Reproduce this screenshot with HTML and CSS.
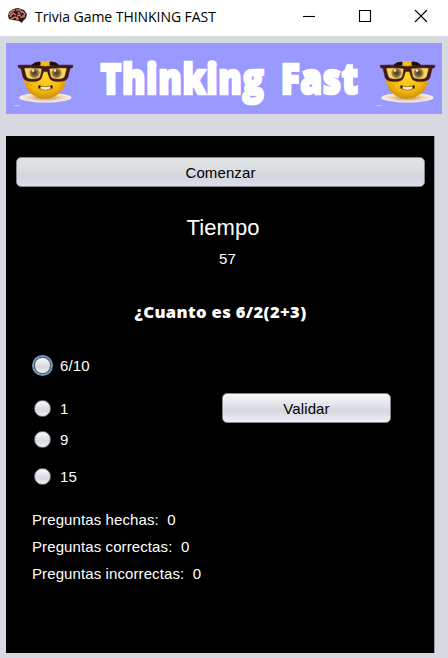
FILE: index.html
```html
<!DOCTYPE html>
<html lang="es">
<head>
<meta charset="utf-8">
<title>Trivia Game THINKING FAST</title>
<link rel="stylesheet" href="styles.css">
</head>
<body>
<header class="titlebar">
  <svg class="brain" width="22" height="18" viewBox="0 0 22 18">
    <path d="M1 9 2 5 6 2l5-1 6 2 3 4-1 4-3 3-1 2-3-2-6-1-4-1z" fill="#2c1715"/>
    <path d="M2 8l3-4 3-1M3 10l3-4 3 2M4 12l4-2 3 1M9 3l4 0 2 3M11 5l2 3-3 1M15 4l3 3-2 2M13 10l3 0 2-1M9 12l3 0" fill="none" stroke="#c97a70" stroke-width="1.5"/>
  </svg>
  <h1 class="title">Trivia Game THINKING FAST</h1>
  <div class="controls">
    <svg width="14" height="14" viewBox="0 0 14 14"><path d="M1 7.5h12" /></svg>
    <svg width="14" height="14" viewBox="0 0 14 14"><path d="M1.500 1.500h11v11h-11z"/></svg>
    <svg width="14" height="14" viewBox="0 0 14 14"><path d="M1 1l12 12M13 1L1 13"/></svg>
  </div>
</header>
<main class="content">
  <svg class="banner" width="436" height="71" viewBox="6 43 436 71">
    <defs>
      <radialGradient id="skin" cx=".5" cy=".4" r=".62">
        <stop offset="0" stop-color="#ffd727"/><stop offset=".65" stop-color="#f2b90d"/><stop offset="1" stop-color="#d08a06"/>
      </radialGradient>
      <radialGradient id="shade">
        <stop offset="0" stop-color="#b98540"/><stop offset=".6" stop-color="#ecd3b4"/><stop offset="1" stop-color="#fbf3ea"/>
      </radialGradient>
      <radialGradient id="eye">
        <stop offset="0" stop-color="#4b3518"/><stop offset=".6" stop-color="#80653a"/><stop offset="1" stop-color="#c7ac67"/>
      </radialGradient>
      <g id="nerd">
        <ellipse cx="45.3" cy="97.7" rx="26.2" ry="4.8" fill="url(#shade)"/>
        <path d="M14 105.7h6" stroke="#c9c8f8"/>
        <ellipse cx="45" cy="79.8" rx="20.8" ry="18.8" fill="url(#skin)"/>
        <path d="M31 66q3-4 9-4v3zM50 62q7 0 9 4l-9-1z" fill="#17100c" stroke="#17100c"/>
        <path d="M23 68h19l-1 9q-2 3-8 3-7 0-8-4zM49 68h19l-3 9q-2 3-8 3-6 0-7-4z" fill="#f8d758"/>
        <circle cx="34.5" cy="73" r="5.3" fill="url(#eye)"/>
        <circle cx="56.5" cy="73" r="5.3" fill="url(#eye)"/>
        <circle cx="33" cy="70.5" r="1.2" fill="#fff5c8"/><circle cx="55" cy="70.5" r="1.2" fill="#fff5c8"/>
        <path d="M18 65.2q13-1 27.5 1.2Q59 64.2 73 65.2l-.5 2.3-2.5 1-2 8.5q-1 4.5-10 4.5-8 0-9-5l-1.500-5h-4l-1.500 5q-1 5-9 5-9 0-10-4.500l-2-8.500-2.500-1zM24 68l2 8q1 3.200 7 3.200 6.500 0 7.500-3.200l1.500-7.500q-9-1.200-18-.5zm25 .5 1.500 7.500q1 3.200 7.500 3.200 6 0 7-3.200l2-8q-9-.7-18 .5z" fill="#411919" stroke="#411919" stroke-width=".5" fill-rule="evenodd"/>
        <path d="M39 86q6 1.500 13 0l-1 3q-5.500 2.500-11 0z" fill="#fff0cf" stroke="#8d4b0c" stroke-width=".7"/>
        <path d="M39.500 85.500v3M51.500 85.500v3" stroke="#1d1209" stroke-width="2"/>
        <path d="M28 83h1M31 85h1M33 82h1M57 82h1M60 85h1M62 83h1" stroke="#e57b0a"/>
      </g>
    </defs>
    <rect x="6" y="43" width="436" height="71" fill="#9999ff"/>
    <use href="#nerd"/>
    <use href="#nerd" x="362"/>
    <text class="logo" x="100.500" y="94" textLength="258" lengthAdjust="spacingAndGlyphs">Thinking Fast</text>
  </svg>
  <section class="panel">
    <button class="btn start">Comenzar</button>
    <div class="timer-label">Tiempo</div>
    <div class="timer">57</div>
    <h2 class="question">¿Cuanto es 6/2(2+3)</h2>
    <div class="answers">
      <div class="options">
        <label class="option first"><span class="dot focused"></span>6/10</label>
        <label class="option second"><span class="dot"></span>1</label>
        <label class="option third"><span class="dot"></span>9</label>
        <label class="option"><span class="dot"></span>15</label>
      </div>
      <button class="btn check">Validar</button>
    </div>
    <div class="stats">
      <p class="stat">Preguntas hechas:&nbsp; 0</p>
      <p class="stat">Preguntas correctas:&nbsp; 0</p>
      <p class="stat">Preguntas incorrectas:&nbsp; 0</p>
    </div>
  </section>
</main>
</body>
</html>
```
FILE: styles.css
```css
* { box-sizing: border-box; }
body {
  margin: 0;
  height: 658px;
  overflow: hidden;
  background: #d6d9df;
  font-family: "Liberation Sans", sans-serif;
  font-size: 15px;
  letter-spacing: 0.1px;
}
.titlebar {
  display: flex;
  align-items: center;
  height: 36px;
  padding: 0 20px 4px 7px;
  background: #fff;
}
.brain { flex: none; }
.title {
  margin: 2px 0 0 6px;
  font: 400 14px/20px "Open Sans", "Noto Sans", sans-serif;
  letter-spacing: -0.05px;
  white-space: nowrap;
  color: #000;
}
.controls { display: flex; gap: 42px; margin-left: auto; }
.controls svg { fill: none; stroke: #000; stroke-width: 1.1; }
.content { padding: 7px 6px 0; }
.banner { display: block; }
.logo {
  font: 800 43px "Open Sans", sans-serif;
  word-spacing: 8px;
  letter-spacing: 0.8px;
  fill: #fff;
  stroke: #fff;
  stroke-width: 2.6px;
}
.panel {
  width: 429px;
  height: 517px;
  margin-top: 22px;
  padding: 21px 9px 0 10px;
  background: #000;
  border-right: 1px solid #999ba0;
  color: #fff;
}
.btn {
  display: block;
  border: 1px solid #85888f;
  border-radius: 5px;
  padding: 1px 0 0;
  font: inherit;
  letter-spacing: inherit;
  color: #000;
}
.start {
  width: 409px;
  height: 30px;
  background: linear-gradient(#e1e4e6, #d9dde0 45%, #d2d5dd 62%, #dadde5);
}
.timer-label {
  margin-top: 28px;
  padding-left: 5px;
  font-size: 22px;
  line-height: 26px;
  text-align: center;
}
.timer { margin-top: 9px; padding-left: 14px; line-height: 18px; text-align: center; }
.question {
  margin: 33px 0 0;
  font: 800 16.6px/22px "Open Sans", sans-serif;
  letter-spacing: 0.35px;
  text-align: center;
}
.answers { display: flex; height: 155px; margin-top: 29px; }
.options { width: 206px; padding: 3px 0 0 16px; }
.option { display: flex; align-items: center; height: 20px; gap: 7px; }
.first { margin-bottom: 23px; }
.second { margin-bottom: 11px; }
.third { margin-bottom: 17px; }
.dot {
  width: 17px;
  height: 17px;
  margin: 0 2px;
  border: 1px solid #72757b;
  border-radius: 50%;
  background: linear-gradient(#fbfbfc, #dfe1e7 45%, #d5d8e0 60%, #f0f1f5);
}
.focused { box-shadow: 0 0 0 2px #719bc5; }
.check {
  width: 169px;
  height: 30px;
  margin-top: 41px;
  background: linear-gradient(#f7f8fa, #dfe1e6 45%, #d5d8df 60%, #eff1f6);
}
.stats { padding: 4px 0 0 16px; }
.stat { margin: 0 0 9px; line-height: 18px; }
```
